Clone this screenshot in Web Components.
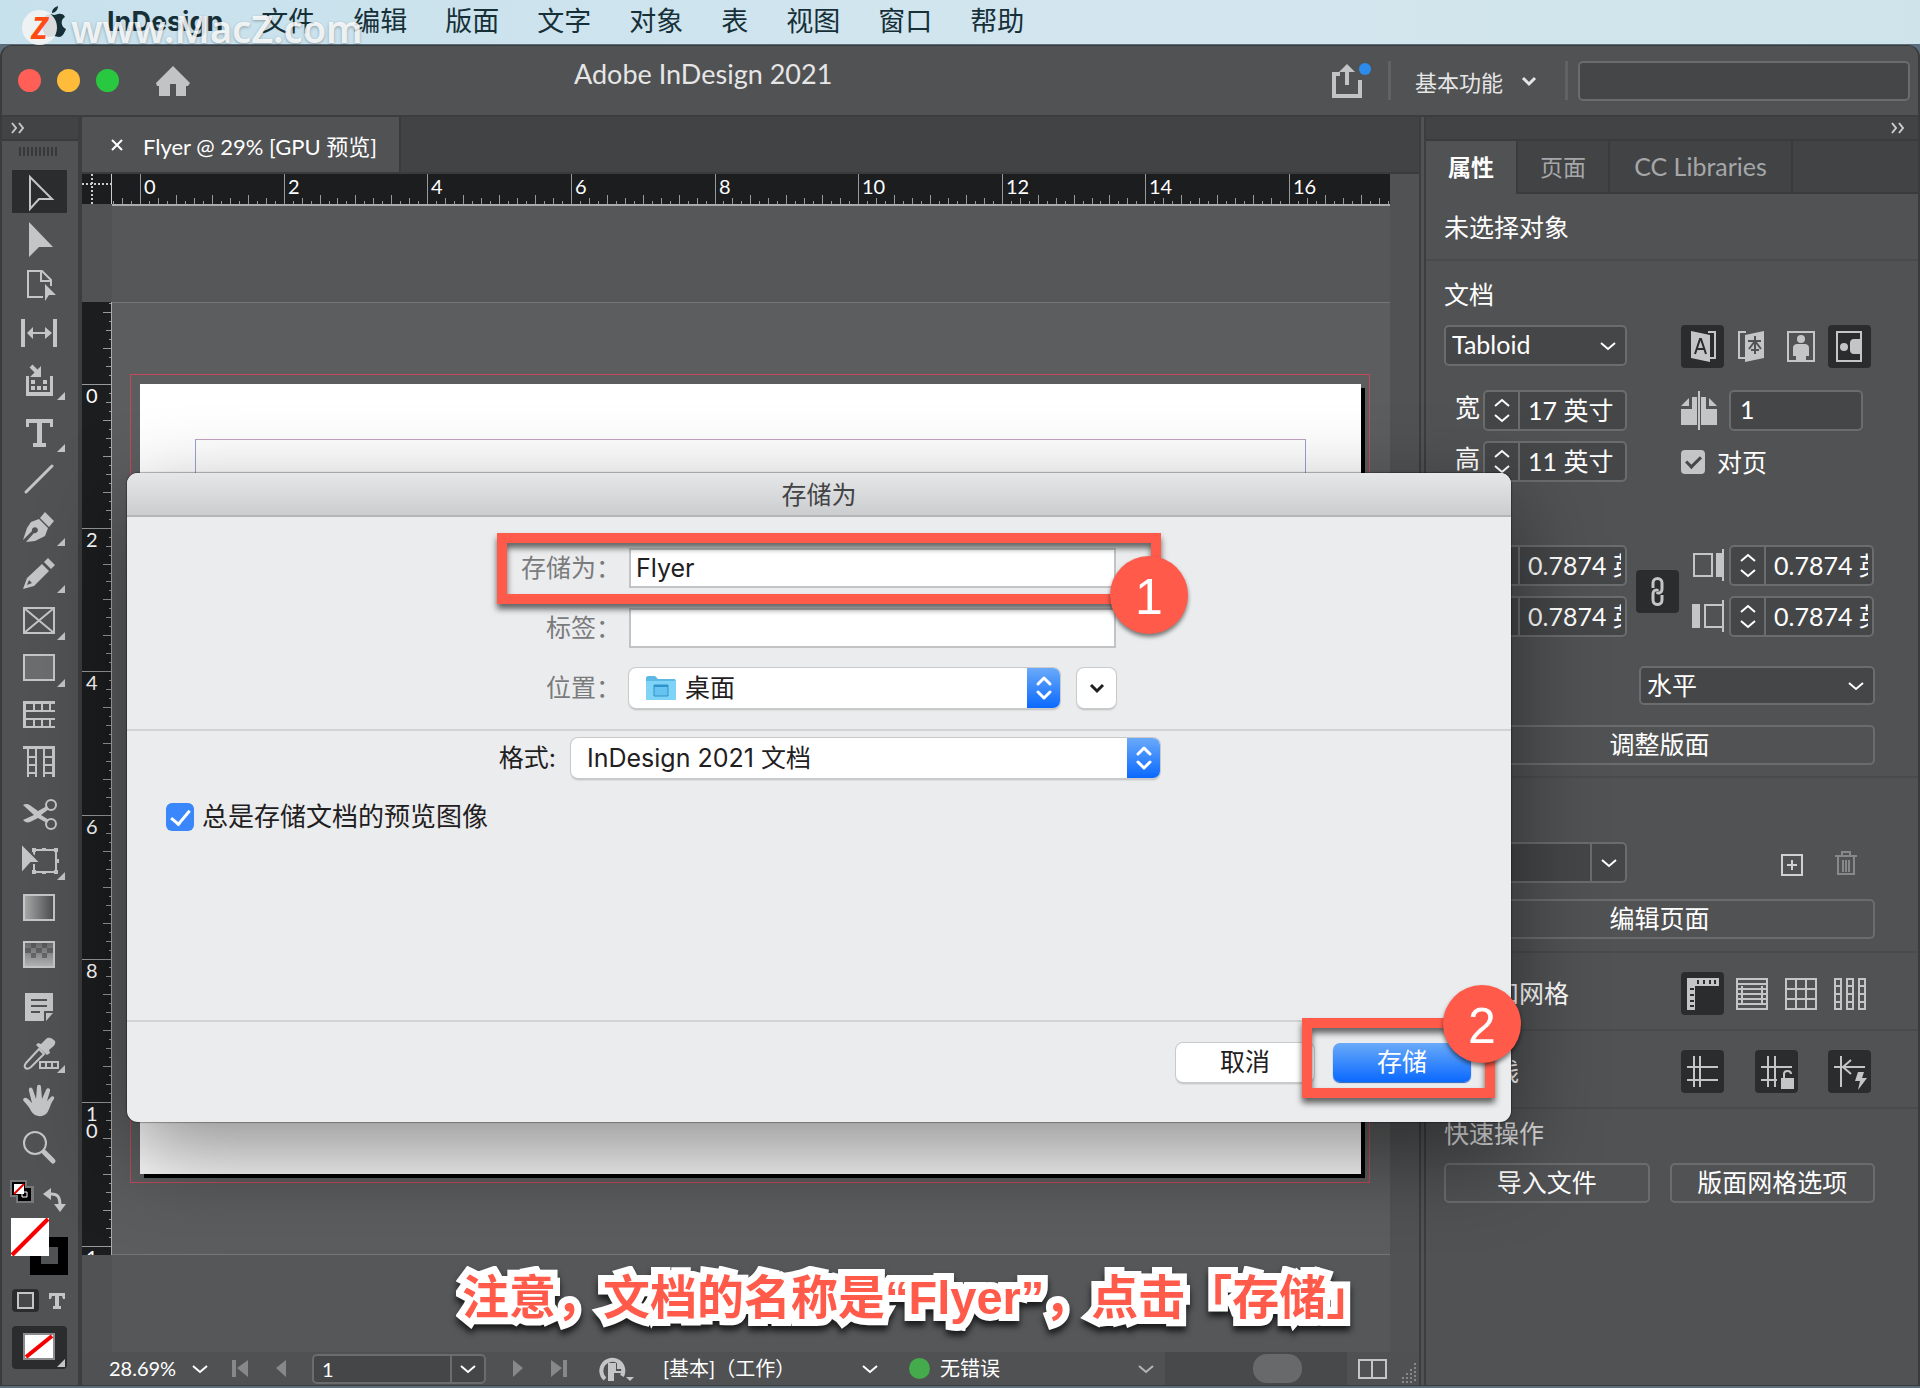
<!DOCTYPE html>
<html lang="zh-CN">
<head>
<meta charset="utf-8">
<title>Adobe InDesign 2021</title>
<style>
  html, body { height: 100%; }
  body {
    margin: 0;
    overflow: hidden;
    background: #5b6d7b;
    color: #fff;
    font-family: Lato, "Noto Sans CJK SC", sans-serif;
    font-size: 25px;
  }
</style>
</head>
<body>
<indesign-desktop></indesign-desktop>

<script>
const CORNER = '<path d="M48 34v8h-8z"/>';

// name: [viewBox, markup]
const ICONS = {
  select: ['-5 -2 55 47', '<path d="M13 7l22 22H22l-9 10z" fill="none" stroke="currentColor" stroke-width="2"/>'],
  direct: ['-5 -2 55 47', '<path d="M12 5l24 25H22L12 40z"/>'],
  page: ['-5 -2 55 47', '<path d="M26 33H11V7h14l9 9v6M24 7v10h10" fill="none" stroke="currentColor" stroke-width="2"/><path d="M28 20l11 11h-7l-4 6z"/>'],
  gap: ['-5 -2 55 47', '<path d="M4 8h4v28H4zM36 8h4v28h-4zM10 22l6-6v5h12v-5l7 6-7 6v-5H16v5z"/>'],
  collect: ['-5 -2 55 47', '<path d="M9 18h3v16h21V18h3v20H9z"/><path d="M14 8l8 8" stroke="currentColor" stroke-width="4"/><path d="M24 8v11H13zM14 22h4v4h-4zM26 22h4v4h-4zM14 28h4v4h-4zM20 28h4v4h-4zM26 28h4v4h-4z"/>' + CORNER],
  type: ['-5 -2 55 47', '<path d="M9 9h27v8h-3v-4h-8v20h4v4H16v-4h4V13h-8v4H9z"/>' + CORNER],
  line: ['-5 -2 55 47', '<path d="M9 35L35 9" stroke="currentColor" stroke-width="3" stroke-linecap="round"/>'],
  pen: ['-5 -2 55 47', '<path d="M28 8l9 9-5 6-9-9zM22 15l9 9-3 8-10 5-9 1 8-9a3 3 0 1 0-2-2l-9 9 4-12 4-6z"/>' + CORNER],
  pencil: ['-5 -2 55 47', '<path d="M31 7l7 7-4 4-7-7zM25 13l7 7-15 15-11 3 4-11zM12 29l-2 5 5-2z" fill-rule="evenodd"/>' + CORNER],
  frame: ['-5 -2 55 47', '<path d="M7 10h30v25H7zM7 10l30 25M37 10L7 35" fill="none" stroke="currentColor" stroke-width="2"/>' + CORNER],
  rect: ['-5 -2 55 47', '<path d="M7 10h30v25H7z" fill="#6c6d6f" stroke="currentColor" stroke-width="2"/>' + CORNER],
  hgrid: ['-5 -2 55 47', '<path d="M6 9h32v3H9v6h29v2H9v6h29v2H9v6h29v2H6z"/><path d="M17 10v10M25 10v10M33 10v10M17 27v9M25 27v9M33 27v9" stroke="currentColor" stroke-width="2"/>'],
  vgrid: ['-5 -2 55 47', '<path d="M6 7h32v31h-3V10H6z"/><path d="M11 8v30M19 8v30M27 8v30M11 18h8M11 26h8M11 34h8M27 18h9M27 26h9M27 34h9" stroke="currentColor" stroke-width="2"/>'],
  scissors: ['-5 -2 55 47', '<g fill="none" stroke="currentColor" stroke-width="2"><circle cx="34" cy="14" r="5"/><circle cx="34" cy="33" r="5"/></g><path d="M6 14c3-2 6-1 8 1l7 5 9-5 2 3-8 6 8 5-2 3-9-5-8 4c-3 1-5 0-7-2l11-5z"/>'],
  transform: ['-5 -2 55 47', '<path d="M17 12h22v22H17z" fill="none" stroke="currentColor" stroke-width="2"/><path d="M15 10h4v4h-4zM25 10h4v3h-4zM37 10h4v4h-4zM37 32h4v4h-4zM15 32h4v4h-4zM25 33h4v3h-4zM38 21h4v4h-4z"/><path d="M4 5l20 20H14L4 36z" stroke="#515254" stroke-width="2"/>' + CORNER],
  gradient: ['-5 -2 55 47', '<defs><linearGradient id="g"><stop stop-color="#aaa"/><stop offset="1" stop-color="#4b4c4e"/></linearGradient></defs><path d="M7 10h30v25H7z" fill="url(#g)" stroke="currentColor" stroke-width="2"/>'],
  feather: ['-5 -2 55 47', '<defs><linearGradient id="g" x2="0" y2="1"><stop stop-color="#666"/><stop offset="1" stop-color="#b4b5b7"/></linearGradient></defs><path d="M7 10h30v25H7z" fill="url(#g)" stroke="currentColor" stroke-width="2"/><path d="M14 11h5v5h-5zM25 11h5v5h-5zM8 16h6v5H8zM19 16h6v5h-6zM30 16h6v5h-6zM14 21h5v5h-5zM25 21h5v5h-5z" fill="#48494b" opacity=".6"/>'],
  note: ['-5 -2 55 47', '<path d="M8 9h28v18h-9v10H8zM29 29h7l-7 8zM14 15v2h16v-2zM14 21v2h16v-2zM14 27v2h9v-2z" fill-rule="evenodd"/>'],
  dropper: ['-5 -2 55 47', '<path d="M22 18l5 5-13 13c-5 4-8 0-5-4z" fill="none" stroke="currentColor" stroke-width="2"/><path d="M21 12l3 1 5-5c3-3 7 0 9 2 1 3-1 5-6 9l1 3-3 2-11-10z"/><path d="M23 31h18v6H23z" fill="#515254" stroke="currentColor" stroke-width="2"/><path d="M29 31v6M35 31v6" stroke="currentColor" stroke-width="2"/>' + CORNER],
  hand: ['-5 -2 55 47', '<path d="M14 33c-2-5-5-7-8-11 1-4 5-2 8 2l1 1-3-12c-1-4 3-5 4-1l3 9 1-12c0-3 4-3 4 0l1 12 4-9c1-3 5-2 4 1l-3 10 3-3c2-3 5-2 4 1-4 5-4 10-7 14-3 4-12 5-16-2z"/>'],
  zoom: ['-5 -2 55 47', '<circle cx="18" cy="18" r="11" fill="none" stroke="currentColor" stroke-width="2"/><path d="M27 27l9 9" stroke="currentColor" stroke-width="5" stroke-linecap="round"/>'],
  defaults: ['0 0 24 24', '<path d="M0 0h17v6h7v17H6v-6H0z" fill="#77787a"/><path d="M2 2h13v13H2z" fill="#000"/><path d="M8 8h13v13H8z" fill="#000"/><path d="M12 12h5v5h-5z" fill="#000" stroke="#fff"/><path d="M4 4h10v10H4z" fill="#fff"/><path d="M4 14L14 4" stroke="#e00" stroke-width="2"/>'],
  swap: ['0 0 24 24', '<path d="M9 6c7 0 9 3 9 12" fill="none" stroke="currentColor" stroke-width="3"/><path d="M1 6l8-6v12zM12 16h12l-6 8z"/>'],
  swatches: ['0 0 57 57', '<path d="M19 19h38v38H19zM30 29v17h17V29z" fill="#000" fill-rule="evenodd"/><path d="M0 0h38v38H0z" fill="#fff"/><path d="M1 37L37 1" stroke="#f40000" stroke-width="4"/>'],
  box: ['0 0 27 23', '<path d="M6 4h15v15H6z" fill="#47484a" stroke="currentColor" stroke-width="2"/>'],
  smalltype: ['0 0 18 18', '<path d="M1 1h16v6h-2l-1-3h-3v10h2v3H5v-3h2V4H4L3 7H1z"/>'],
  none: ['0 0 55 43', '<path d="M12 8h30v25H12z" fill="#fff" stroke="#8b8c8e" stroke-width="2"/><path d="M14 31L40 10" stroke="#f40000" stroke-width="4"/><path d="M53 33v8h-8z"/>'],
  home: ['0 0 36 32', '<path d="M18 1l17 17-2 3h-2v10H21V19h-6v12H4V21H2l-1-3z"/>'],
  share: ['0 0 42 38', '<path d="M8 12H2v22h26V18" fill="none" stroke="currentColor" stroke-width="4"/><path d="M15 2l8 8h-6v13h-4V10H7z"/><circle cx="33" cy="7" r="6" fill="#2d8ceb"/>'],
  down: ['0 0 16 10', '<path d="M1 2l7 6 7-6" fill="none" stroke="currentColor" stroke-width="2"/>'],
  up: ['0 0 16 10', '<path d="M1 8l7-6 7 6" fill="none" stroke="currentColor" stroke-width="2"/>'],
  bold: ['0 0 16 12', '<path d="M2 3l6 6 6-6" fill="none" stroke="currentColor" stroke-width="3"/>'],
  more: ['0 0 16 12', '<path d="M2 1l4 5-4 5M9 1l4 5-4 5" fill="none" stroke="currentColor" stroke-width="2"/>'],
  close: ['0 0 12 12', '<path d="M1 1l10 10M11 1L1 11" stroke="currentColor" stroke-width="2"/>'],
  popup: ['0 0 33 40', '<path d="M11 16l6-6 6 6M11 24l6 6 6-6" fill="none" stroke="#fff" stroke-width="3" stroke-linecap="round" stroke-linejoin="round"/>'],
  ltr: ['0 0 43 43', '<path d="M27 7h7v26h-7" fill="none" stroke="currentColor" stroke-width="2"/><path d="M10 6l19 4v27l-19-4z"/><path d="M14 29l5-15h1l5 15M16 24h7" fill="none" stroke="#2b2c2e" stroke-width="2"/>'],
  rtl: ['0 0 43 43', '<path d="M16 7H9v26h7" fill="none" stroke="currentColor" stroke-width="2"/><path d="M34 6l-19 4v27l19-4z"/><path d="M18 16h13M25 11v18M25 16l-6 8M25 16l6 8M21 25h8" fill="none" stroke="#515254" stroke-width="2"/>'],
  portrait: ['0 0 43 43', '<path d="M9 7h26v29H9z" fill="none" stroke="currentColor" stroke-width="2"/><circle cx="22" cy="14" r="4"/><path d="M14 23c0-3 2-4 4-4h8c2 0 4 1 4 4v8h-3v5H17v-5h-3z"/>'],
  landscape: ['0 0 43 43', '<path d="M9 7h24v29H9z" fill="none" stroke="currentColor" stroke-width="2"/><circle cx="16" cy="22" r="4"/><path d="M33 14h-7c-3 0-4 2-4 4v7c0 2 1 4 4 4h7z"/>'],
  pages: ['0 0 36 40', '<path d="M0 15l8-8v8zM11 6h5v28H0V18h11zM36 15l-8-8v8zM25 6h-5v28h16V18H25zM17 0h2v39h-2z"/>'],
  inner: ['0 0 32 34', '<path d="M2 5h18v22H2z" fill="none" stroke="currentColor" stroke-width="2"/><path d="M24 4h6V0h2v32h-2v-4h-6z"/>'],
  outer: ['0 0 32 34', '<path d="M30 5H13v22h17" fill="none" stroke="currentColor" stroke-width="2"/><path d="M0 4h8v24H0zM30 0h2v32h-2z"/>'],
  link: ['0 0 43 43', '<path d="M17 18v-5c0-6 9-6 9 0v6c0 4-4 5-5 3M26 25v5c0 6-9 6-9 0v-6c0-4 4-5 5-3" fill="none" stroke="currentColor" stroke-width="3"/>'],
  add: ['0 0 24 24', '<path d="M2 2h20v20H2zM12 7v10M7 12h10" fill="none" stroke="currentColor" stroke-width="2"/>'],
  trash: ['0 0 24 26', '<path d="M1 6h22M8 5V2h8v3M4 7v17h16V7M9 10v12M12 10v12M15 10v12" fill="none" stroke="currentColor" stroke-width="2"/>'],
  rulers: ['0 0 43 43', '<path d="M6 6h32v8H14v24H6z"/><path d="M17 8v4M23 8v4M29 8v4M34 8v4M9 17h4M9 23h4M9 29h4M9 34h4" stroke="#2b2c2e" stroke-width="2"/>'],
  baseline: ['0 0 43 43', '<path d="M7 7h30v30H7zM7 12h30M7 17h30M7 22h30M7 27h30M7 32h30M12 14v17M32 14v17" fill="none" stroke="currentColor" stroke-width="2"/>'],
  grid: ['0 0 43 43', '<path d="M7 7h30v30H7zM17 7v30M27 7v30M7 17h30M7 27h30" fill="none" stroke="currentColor" stroke-width="2"/>'],
  columns: ['0 0 43 43', '<path d="M7 7h6v30H7zM19 7h6v30h-6zM31 7h6v30h-6zM7 14h6M7 22h6M7 30h6M19 14h6M19 22h6M19 30h6M31 14h6M31 22h6M31 30h6" fill="none" stroke="currentColor" stroke-width="2"/>'],
  guides: ['0 0 43 43', '<path d="M13 6v31M19 6v31M6 17h31M6 30h31" stroke="currentColor" stroke-width="2"/>'],
  lockguides: ['0 0 43 43', '<path d="M13 6v31M20 6v31M6 17h31M6 30h16" stroke="currentColor" stroke-width="2"/><path d="M26 28h13v11H26z"/><path d="M29 28v-4c0-4 7-4 7 0" fill="none" stroke="currentColor" stroke-width="2"/>'],
  smartguides: ['0 0 43 43', '<path d="M13 6v31M6 17h31M23 10l-8 7 8 7" fill="none" stroke="currentColor" stroke-width="2"/><path d="M30 22h6l-2 6h5l-9 12 2-9h-5z"/>'],
  first: ['0 0 16 17', '<path d="M0 0h4v17H0zM16 0v17L5 8z"/>'],
  prev: ['0 0 10 17', '<path d="M10 0v17L0 8z"/>'],
  next: ['0 0 10 17', '<path d="M0 0v17l10-9z"/>'],
  last: ['0 0 16 17', '<path d="M12 0h4v17h-4zM0 0v17l11-9z"/>'],
  preflight: ['0 0 36 26', '<path d="M6 23A11 11 0 1 1 23 20" fill="none" stroke="currentColor" stroke-width="4"/><path d="M9 7h8v8h8v2H15v8H9z"/><path d="M18 6l7 7h-7zM27 21h8l-4 4z"/>'],
  split: ['0 0 32 22', '<path d="M2 2h27v18H2zM15 2v18" fill="none" stroke="currentColor" stroke-width="2"/>'],
  resize: ['0 0 18 20', '<path d="M16 0v20M12 6v14M8 10v10M4 14v6" stroke="#87888a" stroke-width="2" stroke-dasharray="2 2"/>'],
  folder: ['0 0 32 25', '<path d="M1 2c0-1 1-2 2-2h7l3 3h17l1 2v18H1z" fill="#5cb8e4"/><path d="M1 5h30v19H1z" fill="#7fd3f7"/><path d="M9 9h14v11H9z" fill="#66c3ef" stroke="#2d94cb"/><path d="M9 9h14v2H9z" fill="#2d94cb"/>'],
  apple: ['0 0 24 32', '<path d="M16 0c0 4-3 7-6 7 0-4 3-6 6-7zM12 9c2 0 4-2 7-1 2 0 3 1 4 3-5 3-4 10 1 12-2 5-4 8-7 8-2 0-3-1-5-1s-3 1-5 1C3 31 0 24 0 18 0 12 4 8 8 8c2 0 3 1 4 1z"/>'],
};

class UiIcon extends HTMLElement {
  connectedCallback() {
    const [box, body] = ICONS[this.getAttribute('name')];
    const [, , w, h] = box.split(' ');
    this.attachShadow({ mode: 'open' }).innerHTML = `
      <style>
        :host { display: block; flex: none; width: ${w}px; height: ${h}px; }
        svg { display: block; fill: currentColor; overflow: visible; }
      </style>
      <svg width="${w}" height="${h}" viewBox="${box}" aria-hidden="true">${body}</svg>`;
  }
}

// Small helper: every element below has a fixed template.
function define(name, html) {
  customElements.define(name, class extends HTMLElement {
    constructor() {
      super();
      this.attachShadow({ mode: 'open' }).innerHTML = html(this);
    }
  });
}

const RESET = `
  * { box-sizing: border-box; }
  button, input, select { font: inherit; color: inherit; margin: 0; padding: 0; border: 0; background: none; border-radius: 0; }
  button { display: flex; align-items: center; justify-content: center; }
  select { appearance: none; }
`;

customElements.define('ui-icon', UiIcon);

define('mac-menubar', () => `
  <style>${RESET}
    :host {
      position: relative; display: flex; align-items: center; height: 44px; flex: none;
      padding-left: 42px; background: linear-gradient(90deg, #c7e1ec, #d3e6ef 60%, #cfe4ea);
      color: #173038; font: 27px/44px Inter, "Noto Sans CJK SC", sans-serif;
    }
    nav { display: flex; gap: 38px; margin-left: 41px; }
    a { color: inherit; text-decoration: none; white-space: nowrap; }
    .app { font-weight: 700; }
    .mark {
      position: absolute; left: 22px; top: 10px; display: flex; align-items: center; gap: 14px; height: 35px;
      color: rgba(255, 255, 255, .85); font: 600 38px/40px "Noto Sans", sans-serif; text-shadow: 0 1px 3px rgba(0, 0, 0, .3);
    }
    .mark b {
      width: 35px; height: 35px; border-radius: 50%; background: rgba(244, 244, 244, .88);
      color: #ff4b14; font: italic 700 30px/35px "Noto Sans", sans-serif; text-align: center; text-shadow: none;
    }
  </style>
  <ui-icon name="apple"></ui-icon>
  <nav>
    <a class="app" href="#">InDesign</a><a href="#">文件</a><a href="#">编辑</a><a href="#">版面</a><a href="#">文字</a>
    <a href="#">对象</a><a href="#">表</a><a href="#">视图</a><a href="#">窗口</a><a href="#">帮助</a>
  </nav>
  <div class="mark"><b>Z</b><span>www.MacZ.com</span></div>`);

define('title-bar', () => `
  <style>${RESET}
    :host {
      display: grid; grid-template-columns: 556px auto 1fr; align-items: center; height: 69px; flex: none;
      padding: 0 8px 0 16px; background: #515254; color: #e6e6e6;
    }
    .left, .right { display: flex; align-items: center; }
    .left { gap: 16px; }
    .left i { width: 23px; height: 23px; border-radius: 50%; }
    .left button { margin-left: 20px; color: #c2c3c5; }
    h1 { margin: 0 0 14px; font: 400 27px/32px Lato, sans-serif; }
    .right { justify-content: flex-end; }
    .share { color: #c2c3c5; }
    .sep { width: 3px; height: 39px; background: #616264; margin: 0 10px 0 14px; }
    .space { font-size: 22px; gap: 18px; padding: 0 14px; white-space: nowrap; }
    input { width: 332px; height: 40px; background: #454648; border: 2px solid #6b6c6e; border-radius: 5px; }
  </style>
  <div class="left">
    <i style="background:#ff5f57"></i><i style="background:#febc3a"></i><i style="background:#28c840"></i>
    <button aria-label="主页"><ui-icon name="home"></ui-icon></button>
  </div>
  <h1>Adobe InDesign 2021</h1>
  <div class="right">
    <button class="share" aria-label="共享"><ui-icon name="share"></ui-icon></button>
    <span class="sep"></span>
    <button class="space">基本功能<ui-icon name="bold"></ui-icon></button>
    <span class="sep"></span>
    <input type="search" aria-label="搜索">
  </div>`);

const TOOL_GROUPS = [
  ['select', 'direct', 'page', 'gap', 'collect'],
  ['type', 'line', 'pen', 'pencil', 'frame', 'rect', 'hgrid', 'vgrid'],
  ['scissors', 'transform', 'gradient', 'feather'],
  ['note', 'dropper', 'hand', 'zoom'],
];

define('tool-bar', () => `
  <style>${RESET}
    :host { display: flex; flex-direction: column; background: #515254; color: #c4c5c7; border-right: 2px solid #3c3d3f; }
    header { height: 24px; padding: 5px 8px; background: #424345; border-bottom: 2px solid #3a3b3d; }
    .grip { height: 9px; width: 38px; margin: 6px 0 12px 17px; background: repeating-linear-gradient(90deg, #37383a 0 2px, transparent 2px 4px); }
    .tools { display: flex; flex-direction: column; gap: 5px; padding-left: 10px; }
    .tools div { width: 55px; }
    .tools button { height: 47px; width: 55px; }
    .tools .on { background: linear-gradient(#2b2c2e, #2b2c2e) 0 2px / 55px 43px no-repeat; border-radius: 4px; }
    .row { display: flex; justify-content: space-between; align-items: center; padding: 0 12px 0 8px; }
    .defaults { margin-top: 10px; height: 32px; align-items: flex-start; }
    .defaults .swap { align-self: flex-end; }
    .swatches { margin: 6px 0 14px 9px; width: 57px; }
    .format { height: 23px; padding-left: 10px; }
    .format .on { background: #2b2c2e; border-radius: 4px; }
    .none { margin: 14px 0 0 10px; width: 55px; background: #2b2c2e; border-radius: 4px; }
  </style>
  <header><ui-icon name="more"></ui-icon></header>
  <div class="grip"></div>
  <div class="tools">
    ${TOOL_GROUPS.map(g => `<div>${g.map(t => `<button class="${t === 'select' ? 'on' : ''}" aria-label="${t}"><ui-icon name="${t}"></ui-icon></button>`).join('')}</div>`).join('')}
  </div>
  <div class="row defaults">
    <button aria-label="defaults"><ui-icon name="defaults"></ui-icon></button>
    <button class="swap" aria-label="swap"><ui-icon name="swap"></ui-icon></button>
  </div>
  <button class="swatches" aria-label="fill and stroke"><ui-icon name="swatches"></ui-icon></button>
  <div class="row format">
    <button class="on" aria-label="container"><ui-icon name="box"></ui-icon></button>
    <button aria-label="text"><ui-icon name="smalltype"></ui-icon></button>
  </div>
  <button class="none" aria-label="apply none"><ui-icon name="none"></ui-icon></button>`);

// Ruler with a tick each 1/8 inch; `start` is the pixel where 0 stands.
class PageRuler extends HTMLElement {
  connectedCallback() {
    const vertical = this.hasAttribute('vertical');
    const start = Number(this.getAttribute('start'));
    const inches = Number(this.getAttribute('inches'));
    const inch = 1149 / 16;
    let path = '';
    let labels = '';
    for (let i = -Math.floor(start / inch * 8); i <= inches * 8; i++) {
      const at = Math.round(start + i * inch / 8);
      const len = i >= 0 && i % 16 === 0 ? 30 : i % 4 === 0 ? 9 : i % 2 === 0 ? 6 : 3;
      path += vertical ? `M30 ${at}h${-len}v1h${len}z` : `M${at} 30v${-len}h1v${len}z`;
      if (len === 30) {
        const chars = String(i / 8);
        labels += vertical
          ? [...chars].map((c, n) => `<text x="4" y="${at + 19 + n * 17}">${c}</text>`).join('')
          : `<text x="${at + 4}" y="20">${chars}</text>`;
      }
    }
    this.attachShadow({ mode: 'open' }).innerHTML = `
      <style>
        :host { display: block; background: #1c1d1f; overflow: hidden; min-width: 0; min-height: 0; position: relative; }
        svg { display: block; position: absolute; width: 100%; height: 100%; }
        path { fill: #98999b; }
        text { fill: #fff; font: 20px Lato, sans-serif; }
      </style>
      <svg><path d="${path}"/>${labels}</svg>`;
  }
}
customElements.define('page-ruler', PageRuler);

define('document-view', () => `
  <style>${RESET}
    :host { display: flex; flex-direction: column; min-width: 0; background: #515254; border: solid #3c3d3f; border-width: 0 2px; }
    .tabs { display: flex; height: 57px; flex: none; background: #424345; border-bottom: 2px solid #3a3b3d; }
    .tab { display: flex; align-items: center; gap: 20px; width: 319px; padding-left: 29px; background: #515254; border-right: 2px solid #3a3b3d; font-size: 22px; white-space: nowrap; }
    .view { flex: 1; display: grid; min-height: 0; grid-template-columns: 30px 1fr 29px; grid-template-rows: 30px 98px 1fr 97px; }
    .corner { background: #1c1d1f; border-right: 1px solid #ccc; display: grid; place-items: center; }
    .corner::after { content: ""; width: 100%; height: 100%; background: repeating-linear-gradient(90deg, #ccc 0 2px, transparent 2px 4px) 0 9px / 100% 2px no-repeat, repeating-linear-gradient(#ccc 0 2px, transparent 2px 4px) 9px 0 / 2px 100% no-repeat; }
    .top { grid-column: 2; border-top: 2px solid #aaabad; background: #565759; }
    .rail { grid-column: 1; }
    page-ruler[vertical] { grid-column: 1; border-right: 1px solid #aaabad; }
    .board { grid-column: 2; display: flex; padding: 71px 20px 71px 18px; background: #5c5d5e; border: solid #757678; border-width: 1px 0; min-height: 0; }
    .bleed { flex: 1; display: flex; padding: 9px 8px 8px 9px; border: 1px solid #c24a5a; }
    .sheet { flex: 1; display: flex; padding: 55px; background: #fff; box-shadow: 4px 4px 0 #000; }
    .margins { flex: 1; border: 1px solid #9da0d6; border-top-color: #c3a3c0; }
    .bottom { grid-column: 2; background: #565759; }
  </style>
  <div class="tabs"><div class="tab"><ui-icon name="close"></ui-icon><span>Flyer @ 29% [GPU 预览]</span></div></div>
  <div class="view">
    <div class="corner"></div>
    <page-ruler start="28" inches="18"></page-ruler><span></span>
    <span class="rail"></span><div class="top"></div><span></span>
    <page-ruler vertical start="82" inches="13"></page-ruler>
    <div class="board"><div class="bleed"><div class="sheet"><div class="margins"></div></div></div></div><span></span>
    <span class="rail"></span><div class="bottom"></div>
  </div>
  <status-bar></status-bar>`);

define('status-bar', () => `
  <style>${RESET}
    :host { display: flex; align-items: center; height: 33px; flex: none; padding-left: 27px; font-size: 20px; background: #505153; }
    select { width: 100%; height: 30px; padding-bottom: 2px; }
    label { display: flex; align-items: center; }
    label ui-icon { margin-left: -16px; pointer-events: none; }
    .zoom { width: 99px; }
    .dim { color: #b4b5b7; }
    .nav { display: flex; gap: 28px; padding: 0 26px 0 24px; color: #87888a; }
    .nav.after { padding: 0 32px 0 27px; }
    .page { display: flex; width: 174px; height: 30px; background: #454648; border: 2px solid #6b6c6e; border-radius: 5px; }
    .page input { flex: 1; min-width: 0; padding-left: 8px; }
    .page button { width: 34px; border-left: 2px solid #6b6c6e; }
    .flight { color: #c4c5c7; }
    .profile { width: 215px; margin-left: 28px; }
    .dot { width: 21px; height: 21px; border-radius: 50%; background: #43ab4c; margin: 0 10px 0 31px; flex: none; }
    .errors { width: 214px; }
    .scroll { flex: 1; height: 33px; margin: 0 10px 0 11px; padding: 2px 45px; background: #48494b; display: flex; justify-content: flex-end; }
    .scroll i { width: 49px; height: 29px; border-radius: 14px; background: #68696b; }
    .split { color: #c4c5c7; }
    .grip { margin: 8px 2px 0 10px; }
  </style>
  <label class="zoom"><select aria-label="缩放"><option>28.69%</option></select><ui-icon name="down"></ui-icon></label>
  <div class="nav"><button aria-label="首页"><ui-icon name="first"></ui-icon></button><button aria-label="上一页"><ui-icon name="prev"></ui-icon></button></div>
  <div class="page"><input aria-label="页码" value="1"><button aria-label="选择页面"><ui-icon name="down"></ui-icon></button></div>
  <div class="nav after"><button aria-label="下一页"><ui-icon name="next"></ui-icon></button><button aria-label="末页"><ui-icon name="last"></ui-icon></button></div>
  <button class="flight" aria-label="印前检查"><ui-icon name="preflight"></ui-icon></button>
  <label class="profile"><select aria-label="配置文件"><option>[基本]（工作）</option></select><ui-icon name="down"></ui-icon></label>
  <i class="dot"></i>
  <label class="errors"><select aria-label="错误"><option>无错误</option></select><ui-icon name="down" class="dim"></ui-icon></label>
  <div class="scroll"><i></i></div>
  <button class="split" aria-label="拆分"><ui-icon name="split"></ui-icon></button>
  <ui-icon class="grip" name="resize"></ui-icon>`);

define('spin-field', el => `
  <style>${RESET}
    :host { display: flex; height: 41px; background: #454648; border: 2px solid #6b6c6e; border-radius: 5px; box-sizing: border-box; min-width: 0; }
    .steps { display: flex; flex-direction: column; justify-content: space-evenly; width: 35px; border-right: 2px solid #6b6c6e; flex: none; }
    button { width: 100%; }
    input { flex: 1; min-width: 0; margin: 0 4px 0 8px; height: 36px; padding-bottom: 3px; }
  </style>
  <div class="steps">
    <button aria-label="增加"><ui-icon name="up"></ui-icon></button>
    <button aria-label="减少"><ui-icon name="down"></ui-icon></button>
  </div>
  <input aria-label="${el.getAttribute('label')}" value="${el.getAttribute('value')}">`);

define('drop-field', el => `
  <style>${RESET}
    :host { display: block; }
    label { display: flex; align-items: center; height: 100%; background: #454648; border: 2px solid #6b6c6e; border-radius: 5px; }
    select { flex: 1; min-width: 0; height: 100%; padding: 0 26px 4px 6px; }
    ui-icon { margin: 0 9px 0 -25px; pointer-events: none; }
  </style>
  <label><select aria-label="${el.getAttribute('label')}"><option>${el.getAttribute('value')}</option></select><ui-icon name="down"></ui-icon></label>`);

define('icon-button', el => `
  <style>${RESET}
    :host { display: block; flex: none; }
    button { width: 43px; height: 43px; border-radius: 4px; color: #c4c5c7; }
    :host([on]) button { background: #2b2c2e; }
  </style>
  <button aria-label="${el.getAttribute('icon')}"><ui-icon name="${el.getAttribute('icon')}"></ui-icon></button>`);

define('properties-panel', () => `
  <style>${RESET}
    :host { display: flex; flex-direction: column; background: #515254; border-left: 2px solid #3c3d3f; margin-left: 3px; line-height: 34px; }
    header { display: flex; justify-content: flex-end; height: 24px; padding: 5px 12px; background: #424345; border-bottom: 2px solid #3a3b3d; color: #ccc; flex: none; }
    .tabs { display: flex; height: 53px; flex: none; background: #424345; border-bottom: 2px solid #3a3b3d; }
    .tabs button { height: 51px; border-right: 2px solid #3a3b3d; color: #a6a7a9; font-size: 23px; width: 92px; }
    .tabs .on { height: 53px; padding-bottom: 2px; background: #515254; color: #fff; font-weight: 700; }
    .tabs .wide { width: 183px; font-size: 25px; padding-bottom: 2px; }
    section { padding: 0 43px 0 18px; border-bottom: 2px solid #4a4b4d; flex: none; }
    section:last-child { border: 0; }
    h2 { margin: 0; font-weight: 400; font-size: 25px; line-height: 34px; white-space: nowrap; }
    .status { padding-top: 16px; height: 67px; }
    .doc { padding-top: 16px; height: 517px; }
    .pair { display: grid; grid-template-columns: 183px 194px; justify-content: space-between; }
    .setup { margin-top: 14px; row-gap: 10px; }
    drop-field { height: 41px; }
    .icons { display: flex; justify-content: space-between; align-items: center; height: 43px; width: 190px; }
    .strip .icons { margin-right: 4px; }
    .size { display: grid; grid-template-columns: 1fr 144px; column-gap: 3px; justify-items: end; }
    .size spin-field { justify-self: stretch; }
    .setup > .first { margin-top: 12px; }
    .count { display: flex; align-items: center; gap: 12px; color: #c4c5c7; }
    .count input { width: 134px; height: 41px; padding: 0 0 3px 9px; color: #fff; background: #454648; border: 2px solid #6b6c6e; border-radius: 5px; }
    .facing { display: flex; align-items: center; gap: 12px; height: 41px; }
    .facing input { appearance: none; width: 24px; height: 24px; border-radius: 4px; background: #c4c5c7; display: grid; place-items: center; }
    .facing input::after { content: ""; width: 6px; height: 12px; margin-bottom: 3px; border: solid #47484a; border-width: 0 3px 3px 0; transform: rotate(45deg); }
    .inset { display: grid; grid-template-columns: 183px 43px 32px 145px; column-gap: 9px; align-items: center; row-gap: 10px; margin-top: 63px; }
    .inset .left { margin-left: 39px; }
    .inset icon-button { grid-row: 1 / 3; grid-column: 2; }
    .inset ui-icon { color: #c4c5c7; margin-left: 4px; }
    .binding { margin: 29px 0 20px 195px; height: 39px; }
    .btn { width: 100%; height: 40px; border: 2px solid #6b6c6e; border-radius: 5px; padding-bottom: 2px; }
    .pages { height: 175px; padding-top: 64px; }
    .pages .line { display: flex; align-items: center; margin-bottom: 16px; }
    .combo { display: flex; width: 183px; height: 41px; background: #454648; border: 2px solid #6b6c6e; border-radius: 5px; }
    .combo input { flex: 1; min-width: 0; }
    .combo button { width: 35px; border-left: 2px solid #6b6c6e; }
    .add { margin: 4px 30px 0 auto; color: #d0d1d3; }
    .trash { margin-right: 17px; color: #87888a; }
    .strip { display: flex; justify-content: space-between; align-items: center; height: 78px; padding-top: 4px; }
    .quick { padding-top: 7px; }
    .quick div { display: grid; grid-template-columns: 1fr 1fr; gap: 20px; margin-top: 13px; }
    .quick h2 { color: #dcdcdd; }
  </style>
  <header><ui-icon name="more"></ui-icon></header>
  <div class="tabs"><button class="on">属性</button><button>页面</button><button class="wide">CC Libraries</button></div>
  <section class="status"><h2>未选择对象</h2></section>
  <section class="doc">
    <h2>文档</h2>
    <div class="pair setup">
      <drop-field label="页面大小" value="Tabloid"></drop-field>
      <div class="icons"><icon-button icon="ltr" on></icon-button><icon-button icon="rtl"></icon-button><icon-button icon="portrait"></icon-button><icon-button icon="landscape" on></icon-button></div>
      <div class="size first"><span>宽</span><spin-field label="宽" value="17 英寸"></spin-field></div>
      <div class="count first"><ui-icon name="pages"></ui-icon><input aria-label="页数" value="1"></div>
      <div class="size"><span>高</span><spin-field label="高" value="11 英寸"></spin-field></div>
      <div class="facing"><input type="checkbox" id="facing" checked><label for="facing">对页</label></div>
    </div>
    <div class="inset">
      <spin-field class="left" label="上边距" value="0.7874 英寸"></spin-field>
      <icon-button icon="link" on></icon-button>
      <ui-icon name="inner"></ui-icon>
      <spin-field label="内边距" value="0.7874 英寸"></spin-field>
      <spin-field class="left" label="下边距" value="0.7874 英寸"></spin-field>
      <ui-icon name="outer"></ui-icon>
      <spin-field label="外边距" value="0.7874 英寸"></spin-field>
    </div>
    <drop-field class="binding" label="排版方向" value="水平"></drop-field>
    <button class="btn">调整版面</button>
  </section>
  <section class="pages">
    <div class="line">
      <div class="combo"><input aria-label="页面"><button aria-label="选择页面"><ui-icon name="down"></ui-icon></button></div>
      <button class="add" aria-label="新建页面"><ui-icon name="add"></ui-icon></button>
      <button class="trash" aria-label="删除页面"><ui-icon name="trash"></ui-icon></button>
    </div>
    <button class="btn">编辑页面</button>
  </section>
  <section class="strip"><h2>标尺和网格</h2>
    <div class="icons"><icon-button icon="rulers" on></icon-button><icon-button icon="baseline"></icon-button><icon-button icon="grid"></icon-button><icon-button icon="columns"></icon-button></div>
  </section>
  <section class="strip"><h2>参考线</h2>
    <div class="icons"><icon-button icon="guides" on></icon-button><icon-button icon="lockguides" on></icon-button><icon-button icon="smartguides" on></icon-button></div>
  </section>
  <section class="quick"><h2>快速操作</h2>
    <div><button class="btn">导入文件</button><button class="btn">版面网格选项</button></div>
  </section>`);

define('step-badge', () => `
  <style>
    :host {
      display: grid; place-items: center; box-sizing: border-box; width: 78px; height: 78px; padding-top: 3px; border-radius: 50%;
      background: #ff5a4a; color: #fff; font: 50px/50px "Liberation Sans", sans-serif;
      box-shadow: 0 3px 4px rgba(0, 0, 0, .5);
    }
  </style>
  <slot></slot>`);

define('mac-popup', el => `
  <style>${RESET}
    :host { display: block; }
    label { display: flex; align-items: center; height: 40px; padding-left: 16px; background: #fff; border-radius: 7px; box-shadow: 0 0 0 1px #c9cacc, 0 2px 2px rgba(0, 0, 0, .2); overflow: hidden; }
    select { flex: 1; min-width: 0; height: 40px; }
    .folder { margin-right: 8px; }
    .cap { height: 40px; background: linear-gradient(#6aaaf9, #0a69ff); pointer-events: none; }
  </style>
  <label>
    ${el.hasAttribute('folder') ? '<ui-icon class="folder" name="folder"></ui-icon>' : ''}
    <select aria-label="${el.getAttribute('label')}"><option>${el.getAttribute('value')}</option></select>
    <ui-icon class="cap" name="popup"></ui-icon>
  </label>`);

define('save-dialog', () => `
  <style>${RESET}
    :host {
      display: flex; flex-direction: column; background: #ebeced; color: #1f2022; border-radius: 11px;
      font: 25px/34px Inter, "Noto Sans CJK SC", sans-serif;
      box-shadow: 0 0 1px 1px rgba(0, 0, 0, .3), 0 32px 90px rgba(0, 0, 0, .45);
    }
    header { height: 44px; flex: none; line-height: 45px; text-align: center; color: #434446; background: linear-gradient(#e6e7e8, #cccdcf); border-bottom: 2px solid #b4b5b7; border-radius: 11px 11px 0 0; }
    .names { display: grid; grid-template-columns: 494px 487px; gap: 20px 8px; align-items: center; padding: 31px 0 21px; border-bottom: 2px solid #d2d3d5; }
    .names label { text-align: right; color: #7a7b7d; }
    .names input { height: 40px; padding: 0 5px; background: #fff; border: 2px solid #c2c3c5; }
    .where { display: flex; gap: 17px; }
    .where mac-popup { flex: 1; }
    .more { width: 39px; height: 40px; background: #fff; border-radius: 7px; box-shadow: 0 0 0 1px #c9cacc, 0 2px 2px rgba(0, 0, 0, .2); }
    .options { flex: 1; padding-top: 7px; }
    .format { display: grid; grid-template-columns: 429px 589px; gap: 15px; align-items: center; }
    .format label { text-align: right; }
    .preview { display: flex; align-items: center; gap: 8px; padding: 22px 0 0 39px; font-size: 26px; }
    .preview input { appearance: none; width: 28px; height: 28px; border-radius: 6px; background: #3a86fb; display: grid; place-items: center; }
    .preview input::after { content: ""; width: 8px; height: 16px; margin-bottom: 4px; border: solid #fff; border-width: 0 3px 3px 0; transform: rotate(40deg); }
    footer { display: flex; justify-content: flex-end; gap: 19px; height: 102px; padding: 21px 40px 0; border-top: 2px solid #d2d3d5; }
    footer button { width: 138px; height: 39px; padding-bottom: 2px; background: #fff; border-radius: 7px; box-shadow: 0 0 0 1px #c9cacc, 0 2px 2px rgba(0, 0, 0, .2); }
    footer .ok { background: linear-gradient(#6aaaf9, #0a69ff); color: #fff; box-shadow: 0 1px 1px #2a64b8; }
    /* tutorial marks over the dialog */
    .mark { position: absolute; border: 10px solid #ff5a4a; filter: drop-shadow(0 5px 3px rgba(0, 0, 0, .6)); pointer-events: none; }
    .name-mark { left: 370px; top: 60px; width: 664px; height: 71px; }
    .save-mark { right: 16px; bottom: 24px; width: 193px; height: 80px; }
    step-badge { position: absolute; }
    .one { left: 983px; top: 83px; }
    .two { right: -10px; bottom: 59px; }
  </style>
  <header>存储为</header>
  <div class="names">
    <label for="name">存储为：</label><input id="name" value="Flyer">
    <label for="tags">标签：</label><input id="tags">
    <label>位置：</label>
    <div class="where"><mac-popup folder label="位置" value="桌面"></mac-popup><button class="more" aria-label="展开"><ui-icon name="bold"></ui-icon></button></div>
  </div>
  <div class="options">
    <div class="format"><label>格式:</label><mac-popup label="格式" value="InDesign 2021 文档"></mac-popup></div>
    <div class="preview"><input type="checkbox" id="preview" checked><label for="preview">总是存储文档的预览图像</label></div>
  </div>
  <footer><button>取消</button><button class="ok">存储</button></footer>
  <div class="mark name-mark"></div><step-badge class="one">1</step-badge>
  <div class="mark save-mark"></div><step-badge class="two">2</step-badge>`);

define('caption-text', () => `
  <style>
    :host {
      display: block; color: #ff5a4a; white-space: nowrap;
      font: 700 47px/60px "Liberation Sans", "Noto Sans CJK SC", sans-serif;
      -webkit-text-stroke: 14px #fff; paint-order: stroke fill; stroke-linejoin: round;
      filter: drop-shadow(0 5px 3px rgba(0, 0, 0, .7));
    }
  </style>
  <slot></slot>`);

define('indesign-desktop', () => `
  <style>
    :host { display: flex; flex-direction: column; min-height: 100vh; position: relative; }
    .window { flex: 1; display: flex; flex-direction: column; margin: 1px 0 2px; border: 2px solid #3a3b3d; border-top-width: 1px; border-bottom-width: 1px; border-radius: 12px 12px 0 0; overflow: hidden; background: #515254; }
    .work { flex: 1; display: grid; grid-template-columns: 78px minmax(0, 1fr) 497px; border-top: 2px solid #3c3d3f; }
    save-dialog { position: absolute; left: 127px; right: 409px; top: 473px; height: 649px; }
    caption-text { position: absolute; left: 462px; top: 1268px; }
  </style>
  <mac-menubar></mac-menubar>
  <div class="window">
    <title-bar></title-bar>
    <div class="work">
      <tool-bar></tool-bar>
      <document-view></document-view>
      <properties-panel></properties-panel>
    </div>
  </div>
  <save-dialog role="dialog" aria-label="存储为"></save-dialog>
  <caption-text>注意，文档的名称是“Flyer”，点击「存储」</caption-text>`);
</script>
</body>
</html>
